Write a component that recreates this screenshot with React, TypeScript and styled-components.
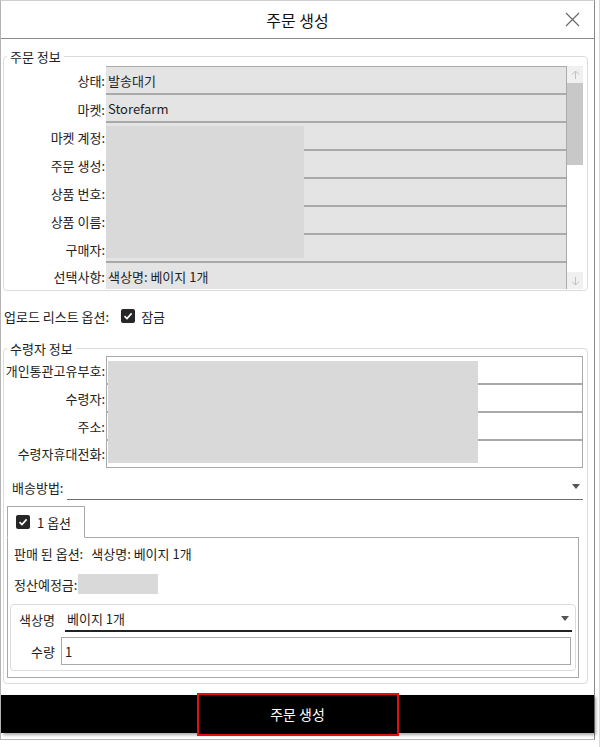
import * as React from 'react';
import styled, { createGlobalStyle } from 'styled-components';

const GlobalStyle = createGlobalStyle`
  html, body { margin: 0; padding: 0; background: #fff; }
  body {
    font-family: "Noto Sans CJK KR", "Noto Sans", sans-serif;
    font-size: 13px;
    color: #1e1e1e;
  }
  * { box-sizing: border-box; }
`;

const Page = styled.div`
  width: 600px;
  height: 747px;
  border-right: 1px solid #d8d8d8;
  background: #fff;
`;

const Window = styled.div`
  width: 595px;
  height: 740px;
  display: flex;
  flex-direction: column;
  border-top: 1px solid #d0d0d0;
  border-left: 1px solid #b4b4b4;
  border-right: 1px solid #8a8a8a;
  border-bottom: 1px solid #b4b4b4;
`;

const Header = styled.div`
  height: 38px;
  flex: none;
  display: grid;
  grid-template-columns: 1fr auto 1fr;
  align-items: center;
  border-bottom: 1px solid #8c8c8c;
`;

const Title = styled.div`
  grid-column: 2;
  font-size: 16px;
  line-height: 20px;
  color: #111;
`;

const CloseButton = styled.div`
  justify-self: end;
  margin-right: 14px;
  width: 15px;
  height: 15px;
  display: flex;
`;

const Body = styled.div`
  flex: 1;
  display: flex;
  flex-direction: column;
  padding: 0 6px 0 2px;
`;

const Group = styled.fieldset<{ $top: number; $pt: number; $bottom: number }>`
  margin: ${p => p.$top}px 0 0 0;
  padding: ${p => p.$pt}px 4px ${p => p.$bottom}px 0;
  border: 1px solid #dcdcdc;
  border-radius: 4px;
  min-width: 0;
`;

const Legend = styled.legend`
  margin-left: 3px;
  padding: 0 3px;
  font-size: 13px;
  line-height: 15px;
  color: #222;
`;

const FormGrid = styled.div<{ $scroll?: boolean }>`
  display: grid;
  grid-template-columns: ${p => (p.$scroll ? '102px 1fr 16px' : '102px 1fr')};
`;

const LabelCol = styled.div`
  display: flex;
  flex-direction: column;
`;

const Label = styled.div<{ $h: number }>`
  height: ${p => p.$h}px;
  display: flex;
  align-items: center;
  justify-content: flex-end;
  padding-right: 1px;
  white-space: nowrap;
  color: #222;
`;

const FieldCol = styled.div`
  position: relative;
  display: flex;
  flex-direction: column;
  border-top: 1px solid #aaa;
  border-right: 1px solid #aaa;
`;

const Field = styled.div<{ $h: number; $last?: boolean }>`
  height: ${p => p.$h}px;
  display: flex;
  align-items: center;
  padding-left: 2px;
  background: #e4e4e4;
  border-bottom: ${p => (p.$last ? 'none' : '2px solid #a9a9a9')};
  white-space: nowrap;
`;

const CellCol = styled.div`
  position: relative;
  display: flex;
  flex-direction: column;
  border: 1px solid #a9a9a9;
`;

const Cell = styled.div<{ $h: number; $last?: boolean }>`
  height: ${p => p.$h}px;
  background: #fff;
  border-bottom: ${p => (p.$last ? 'none' : '2px solid #a9a9a9')};
`;

const Redacted = styled.div`
  position: absolute;
  background: #d9d9d9;
`;

const Scrollbar = styled.div`
  display: flex;
  flex-direction: column;
  background: #fff;
`;

const ScrollButton = styled.div`
  height: 17px;
  flex: none;
  display: flex;
  align-items: center;
  justify-content: center;
  background: #f0f0f0;
`;

const ScrollThumb = styled.div`
  height: 82px;
  flex: none;
  background: #c8c8c8;
`;

const ScrollTrack = styled.div`
  flex: 1;
`;

const OptionRow = styled.div`
  height: 20px;
  margin: 15px 0 0 1px;
  display: flex;
  align-items: center;
`;

const CheckBox = styled.span`
  width: 14px;
  height: 14px;
  flex: none;
  display: inline-flex;
  align-items: center;
  justify-content: center;
  background: #262626;
  border-radius: 2px;
`;

const ShipRow = styled.div`
  height: 26px;
  margin-top: 6px;
  display: flex;
  align-items: stretch;
`;

const ShipLabel = styled.div`
  display: flex;
  align-items: center;
  padding-left: 8px;
  width: 63px;
  white-space: nowrap;
`;

const Combo = styled.div<{ $line: string; $w: number }>`
  flex: 1;
  display: flex;
  align-items: center;
  justify-content: space-between;
  padding: 0 2px 0 2px;
  border-bottom: ${p => p.$w}px solid ${p => p.$line};
`;

const Arrow = styled.span`
  width: 0;
  height: 0;
  border-left: 4px solid transparent;
  border-right: 4px solid transparent;
  border-top: 5px solid #555;
  margin-right: 1px;
`;

const Tabs = styled.div`
  margin: 6px 4px 0 3px;
  display: flex;
  flex-direction: column;
`;

const TabStrip = styled.div`
  display: flex;
  margin-bottom: -1px;
  position: relative;
  z-index: 1;
`;

const Tab = styled.div`
  width: 78px;
  height: 32px;
  display: flex;
  align-items: center;
  gap: 7px;
  padding-left: 8px;
  background: #fff;
  border: 1px solid #a9a9a9;
  border-bottom: 1px solid #fff;
`;

const Panel = styled.div`
  border: 1px solid #a9a9a9;
  padding: 5px 0 6px 0;
`;

const TextRow = styled.div<{ $mt?: number }>`
  height: 20px;
  margin-top: ${p => p.$mt || 0}px;
  padding-left: 6px;
  display: flex;
  align-items: center;
  white-space: nowrap;
`;

const SoldValue = styled.span`
  margin-left: 8px;
`;

const AmountBox = styled.span`
  width: 80px;
  height: 20px;
  background: #d9d9d9;
  margin-left: 1px;
`;

const SubGroup = styled.div`
  margin: 10px 2px 0 2px;
  padding: 2px 0 5px 0;
  border: 1px solid #dcdcdc;
  border-radius: 4px;
  display: flex;
  flex-direction: column;
  gap: 5px;
`;

const SubRow = styled.div<{ $h: number }>`
  height: ${p => p.$h}px;
  display: grid;
  grid-template-columns: 50px 1fr;
  align-items: stretch;
`;

const SubLabel = styled.div`
  display: flex;
  align-items: center;
  justify-content: flex-end;
  padding-right: 6px;
  white-space: nowrap;
`;

const SubCombo = styled(Combo)`
  margin: 0 3px 0 4px;
  padding-left: 2px;
`;

const TextInput = styled.div`
  margin-right: 4px;
  display: flex;
  align-items: center;
  padding-left: 3px;
  border: 1px solid #a9a9a9;
`;

const ActionBar = styled.div`
  height: 38px;
  margin: 11px -6px 0 -2px;
  display: flex;
  align-items: center;
  justify-content: center;
  background: #000;
  box-shadow: 2px 2px 3px rgba(0, 0, 0, 0.35);
`;

const PrimaryButton = styled.div`
  width: 202px;
  height: 43px;
  display: flex;
  align-items: center;
  justify-content: center;
  background: #000;
  border: 2px solid #e01010;
  color: #fff;
  font-size: 14px;
`;

const Check = () => (
  <CheckBox>
    <svg width="10" height="10" viewBox="0 0 10 10">
      <polyline points="1.5,5.2 4,7.6 8.6,2.4" fill="none" stroke="#fff" strokeWidth="1.6" />
    </svg>
  </CheckBox>
);

const ScrollArrow = ({ down }: { down?: boolean }) => (
  <svg width="9" height="10" viewBox="0 0 9 10" style={{ transform: down ? 'rotate(180deg)' : undefined }}>
    <path d="M4.5 1 V9 M1 4.5 L4.5 1 L8 4.5" fill="none" stroke="#c0c0c0" strokeWidth="1" />
  </svg>
);

const orderRows = [
  { label: '상태:', value: '발송대기' },
  { label: '마켓:', value: 'Storefarm' },
  { label: '마켓 계정:', value: '' },
  { label: '주문 생성:', value: '' },
  { label: '상품 번호:', value: '' },
  { label: '상품 이름:', value: '' },
  { label: '구매자:', value: '' },
  { label: '선택사항:', value: '색상명: 베이지 1개' },
];

const recipientRows = ['개인통관고유부호:', '수령자:', '주소:', '수령자휴대전화:'];

export default function App() {
  return (
    <Page>
      <GlobalStyle />
      <Window>
        <Header>
          <Title>주문 생성</Title>
          <CloseButton>
            <svg width="15" height="15" viewBox="0 0 15 15">
              <path d="M1 1 L14 14 M14 1 L1 14" stroke="#6a6a6a" strokeWidth="1.2" />
            </svg>
          </CloseButton>
        </Header>

        <Body>
          <Group $top={10} $pt={2} $bottom={1}>
            <Legend>주문 정보</Legend>
            <FormGrid $scroll>
              <LabelCol>
                {orderRows.map((r, i) => (
                  <Label key={i} $h={i === 0 ? 29 : i === orderRows.length - 1 ? 26 : 28}>{r.label}</Label>
                ))}
              </LabelCol>
              <FieldCol>
                {orderRows.map((r, i) => (
                  <Field key={i} $h={i === orderRows.length - 1 ? 26 : 28} $last={i === orderRows.length - 1}>
                    {r.value}
                  </Field>
                ))}
                <Redacted style={{ left: 0, top: 59, width: 198, height: 132 }} />
              </FieldCol>
              <Scrollbar>
                <ScrollButton><ScrollArrow /></ScrollButton>
                <ScrollThumb />
                <ScrollTrack />
                <ScrollButton><ScrollArrow down /></ScrollButton>
              </Scrollbar>
            </FormGrid>
          </Group>

          <OptionRow>
            <span>업로드 리스트 옵션:</span>
            <span style={{ width: 12 }} />
            <Check />
            <span style={{ marginLeft: 6 }}>잠금</span>
          </OptionRow>

          <Group $top={15} $pt={0} $bottom={5}>
            <Legend>수령자 정보</Legend>
            <FormGrid>
              <LabelCol>
                {recipientRows.map((l, i) => (
                  <Label key={i} $h={i === 0 ? 28 : i === recipientRows.length - 1 ? 27 : 28}>{l}</Label>
                ))}
              </LabelCol>
              <CellCol>
                {recipientRows.map((l, i) => (
                  <Cell key={l} $h={i === recipientRows.length - 1 ? 26 : 28} $last={i === recipientRows.length - 1} />
                ))}
                <Redacted style={{ left: 1, top: 4, width: 370, height: 102 }} />
              </CellCol>
            </FormGrid>

            <ShipRow>
              <ShipLabel>배송방법:</ShipLabel>
              <Combo $line="#6e6e6e" $w={1}>
                <span />
                <Arrow />
              </Combo>
            </ShipRow>

            <Tabs>
              <TabStrip>
                <Tab>
                  <Check />
                  <span>1 옵션</span>
                </Tab>
              </TabStrip>
              <Panel>
                <TextRow>
                  판매 된 옵션:<SoldValue>색상명: 베이지 1개</SoldValue>
                </TextRow>
                <TextRow $mt={11}>
                  정산예정금:<AmountBox />
                </TextRow>
                <SubGroup>
                  <SubRow $h={25}>
                    <SubLabel>색상명</SubLabel>
                    <SubCombo $line="#222" $w={2}>
                      <span>베이지 1개</span>
                      <Arrow />
                    </SubCombo>
                  </SubRow>
                  <SubRow $h={28}>
                    <SubLabel>수량</SubLabel>
                    <TextInput>1</TextInput>
                  </SubRow>
                </SubGroup>
              </Panel>
            </Tabs>
          </Group>

          <ActionBar>
            <PrimaryButton>주문 생성</PrimaryButton>
          </ActionBar>
        </Body>
      </Window>
    </Page>
  );
}
